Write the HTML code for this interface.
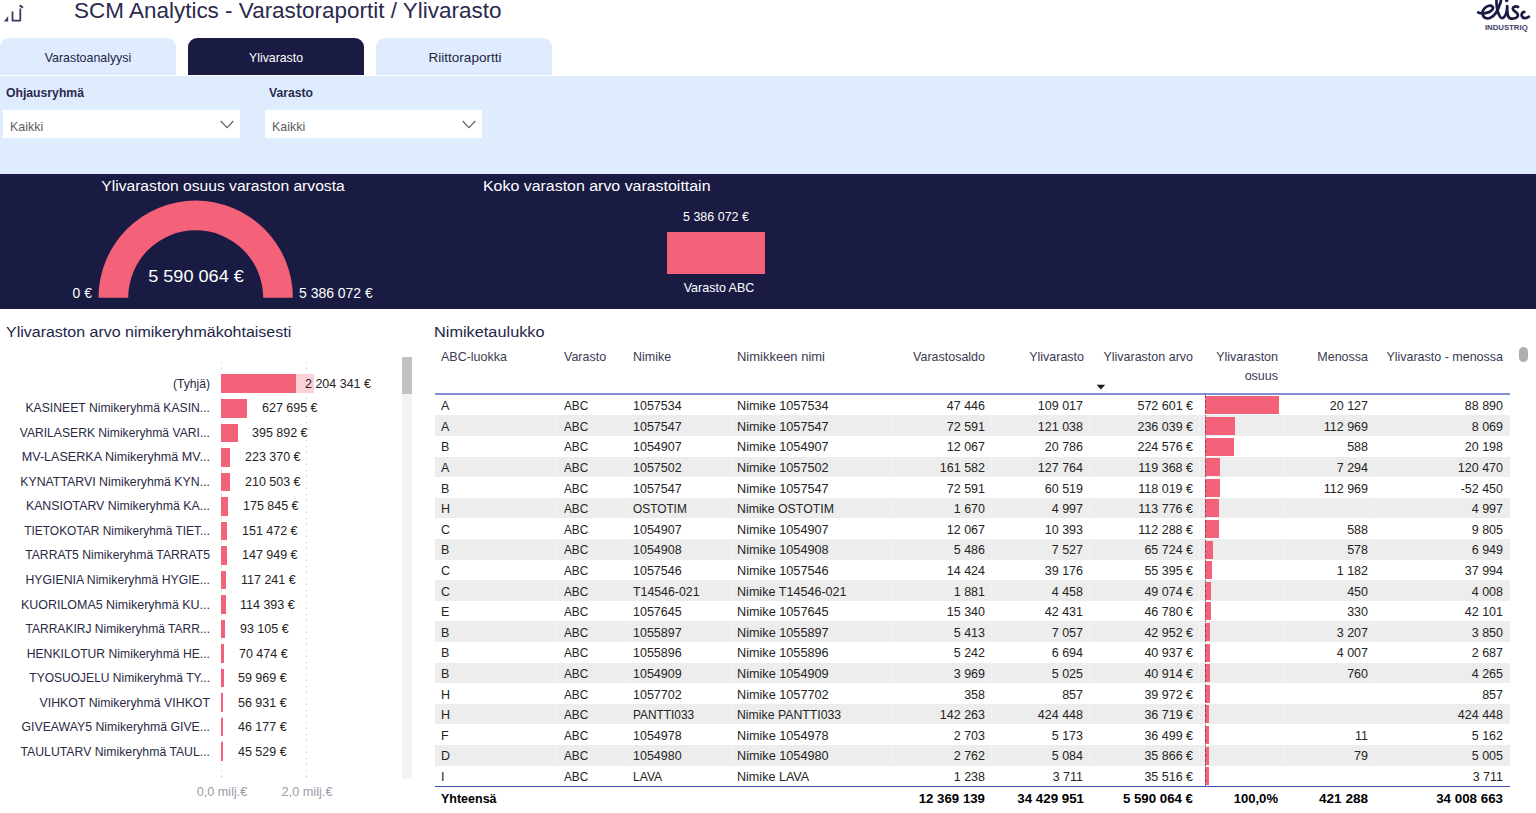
<!DOCTYPE html>
<html lang="fi"><head><meta charset="utf-8"><title>SCM Analytics - Varastoraportit / Ylivarasto</title>
<style>
*{box-sizing:border-box;margin:0;padding:0}
html,body{width:1536px;height:813px;overflow:hidden;background:#fff}
body{position:relative;font-family:"Liberation Sans",sans-serif;color:#252423;}
.a{position:absolute;white-space:nowrap}
.t,.r,.c{position:absolute;white-space:nowrap;line-height:20px;height:20px}
.t{transform-origin:0 50%}
.r{text-align:right;transform-origin:100% 50%}
.c{text-align:center;transform-origin:50% 50%}
.tab{position:absolute;top:38.4px;height:36.7px;width:176px;border-radius:9px 9px 0 0;background:#dfecfd}
.dd{position:absolute;top:110px;height:28.2px;background:#fff;}
.row{position:absolute;left:435px;width:1074.5px;height:20.6px}
.sep{position:absolute;top:394px;width:1px;height:393px;background:rgba(255,255,255,.3)}
</style></head><body>

<svg class="a" style="left:0;top:0" width="30" height="26" viewBox="0 0 30 26"><path d="M3.9 21.6 L8.2 16 L8.2 21.6 Z" fill="#3b3a5e"/><path d="M12.5 11.6 V20.6 H20.3 V8.6" fill="none" stroke="#3b3a5e" stroke-width="1.8" stroke-linejoin="round"/><path d="M19.6 5.4 L23 7.6" stroke="#3b3a5e" stroke-width="1.9" fill="none"/></svg>
<div class="t" id="title" style="top:-0.27px;font-size:22.7px;left:74.3px;color:#2b2a4c;transform:scaleX(0.9904);">SCM Analytics - Varastoraportit / Ylivarasto</div>
<svg class="a" style="left:1472px;top:0" width="64" height="34" viewBox="0 0 64 34">
<g fill="none" stroke="#1a1b43" stroke-width="2.7" stroke-linecap="round" stroke-linejoin="round">
<path d="M6.2 12.5 C9.5 13.9 17 13.6 20.2 9.9 C22.2 7.4 20 5.2 16.8 5.8 C12.3 6.8 9.9 11.2 10.6 14.4 C11.4 18 15 19.1 18.4 17.7 C22.7 15.9 26.2 10 28.3 3 C29.1 0.5 29.5 -2 28.7 -4 C27.4 -6.5 24.7 -4 24.5 0 C24.3 5 25.6 12 27.6 16 C28.7 18.2 30.6 18.9 32.1 17.2 C34.2 14.8 35 10 35.2 6.2 C35.2 10 35.3 13.8 36.2 16.2 C37 18.2 39.5 18.9 41.8 18.5 C45 18 47 16 45.2 13.4 C43.7 11.3 40.5 10.6 40.8 8.6 C41.2 6.6 44.2 5.9 46.0 7.0"/>
<path d="M52.3 11.9 C50.4 11.9 49.2 14.1 49.8 16 C50.6 18.4 54.1 18.9 56.8 16.7"/>
</g><circle cx="34.7" cy="0.5" r="1.7" fill="#1a1b43"/>
<text x="34.3" y="29.5" text-anchor="middle" font-family="Liberation Sans, sans-serif" font-weight="bold" font-size="7.8" fill="#3f3f68" textLength="42.8" lengthAdjust="spacingAndGlyphs">INDUSTRIQ</text></svg>

<div class="tab" style="left:0"></div>
<div class="tab" style="left:188px;background:#1a1b43"></div>
<div class="tab" style="left:376px"></div>
<div class="a" style="left:0;top:76px;width:1536px;height:98px;background:#dfecfd"></div>
<div class="c" id="tb1" style="top:48.23px;font-size:13.2px;left:-111.8px;width:400px;color:#252449;transform:scaleX(0.9389);">Varastoanalyysi</div>
<div class="c" id="tb2" style="top:48.23px;font-size:13.2px;left:76px;width:400px;color:#fff;transform:scaleX(0.9325);">Ylivarasto</div>
<div class="c" id="tb3" style="top:48.23px;font-size:13.2px;left:265px;width:400px;color:#252449;transform:scaleX(1.0268);">Riittoraportti</div>
<div class="t" id="f1" style="top:83.06px;font-size:12.8px;left:6px;color:#2b2a4e;font-weight:bold;transform:scaleX(0.9536);">Ohjausryhmä</div>
<div class="t" id="f2" style="top:83.06px;font-size:12.8px;left:268.5px;color:#2b2a4e;font-weight:bold;transform:scaleX(0.9514);">Varasto</div>
<div class="dd" style="left:3px;width:237px"></div>
<div class="dd" style="left:265px;width:217px"></div>
<div class="t" id="k1" style="top:116.83px;font-size:13.2px;left:10px;color:#605e5c;transform:scaleX(0.947);">Kaikki</div>
<div class="t" id="k2" style="top:116.83px;font-size:13.2px;left:272px;color:#605e5c;transform:scaleX(0.947);">Kaikki</div>
<svg class="a" style="left:218px;top:118px" width="18" height="14"><path d="M2.7 3 L9 9.6 L15.3 3" fill="none" stroke="#605e5c" stroke-width="1.1"/></svg>
<svg class="a" style="left:460px;top:118px" width="18" height="14"><path d="M2.7 3 L9 9.6 L15.3 3" fill="none" stroke="#605e5c" stroke-width="1.1"/></svg>

<div class="a" style="left:0;top:173.7px;width:1536px;height:135px;background:#1a1b43"></div>
<svg class="a" style="left:90px;top:195px" width="215" height="105" viewBox="90 195 215 105"><path d="M98.5 297.8 A97.2 97.2 0 0 1 292.9 297.8 L263.2 297.8 A67.5 67.5 0 0 0 128.2 297.8 Z" fill="#f4627a"/></svg>
<div class="a" style="left:667.4px;top:232px;width:97.2px;height:41.8px;background:#f4627a"></div>
<div class="c" id="g1" style="top:175.66px;font-size:15.4px;left:23.19999999999999px;width:400px;color:#fff;transform:scaleX(1.0165);">Ylivaraston osuus varaston arvosta</div>
<div class="c" id="g2" style="top:266.21px;font-size:17.3px;left:-4.5px;width:400px;color:#fff;transform:scaleX(1.0482);">5 590 064 €</div>
<div class="r" id="g3" style="top:282.75px;font-size:14px;left:-307.6px;width:400px;color:#fff;transform:scaleX(0.9965);">0 €</div>
<div class="t" id="g4" style="top:282.75px;font-size:14px;left:299.4px;color:#fff;transform:scaleX(0.9977);">5 386 072 €</div>
<div class="t" id="b1" style="top:175.66px;font-size:15.4px;left:482.5px;color:#fff;transform:scaleX(1.0348);">Koko varaston arvo varastoittain</div>
<div class="c" id="b2" style="top:207.03px;font-size:13.2px;left:516.2px;width:400px;color:#fff;transform:scaleX(0.947);">5 386 072 €</div>
<div class="c" id="b3" style="top:277.83px;font-size:13.2px;left:519.3px;width:400px;color:#fff;transform:scaleX(0.947);">Varasto ABC</div>
<div class="t" id="lt" style="top:321.76px;font-size:15.4px;left:6.4px;color:#252449;transform:scaleX(1.0387);">Ylivaraston arvo nimikeryhmäkohtaisesti</div>
<div class="a" style="left:221px;top:362px;width:1px;height:418px;background:repeating-linear-gradient(to bottom,#bcc0cf 0,#bcc0cf 1.2px,transparent 1.2px,transparent 6px)"></div>
<div class="a" style="left:306px;top:362px;width:1px;height:418px;background:repeating-linear-gradient(to bottom,#bcc0cf 0,#bcc0cf 1.2px,transparent 1.2px,transparent 6px)"></div>
<div class="a" style="left:402.3px;top:357px;width:9.5px;height:422px;background:#f3f3f3"></div>
<div class="a" style="left:402.3px;top:357px;width:9.5px;height:36.7px;background:#c1c1c1"></div>

<div class="a" style="left:221px;top:374.4px;width:92.8px;height:18.7px;background:#f4627a"></div>
<div class="r" id="gl0" style="top:373.73px;font-size:13.2px;left:-189.7px;width:400px;color:#2b2a45;transform:scaleX(0.9203);">(Tyhjä)</div>
<div class="a" style="left:295.7px;top:374.4px;width:25px;height:18.7px;background:rgba(255,255,255,.7)"></div>
<div class="t" id="gv0" style="top:373.73px;font-size:13.2px;left:305.3px;transform:scaleX(0.947);">2 204 341 €</div>
<div class="a" style="left:221px;top:398.9px;width:26.4px;height:18.7px;background:#f4627a"></div>
<div class="r" id="gl1" style="top:398.26px;font-size:13.2px;left:-189.7px;width:400px;color:#2b2a45;transform:scaleX(0.9233);">KASINEET Nimikeryhmä KASIN...</div>
<div class="t" id="gv1" style="top:398.26px;font-size:13.2px;left:262.0px;transform:scaleX(0.947);">627 695 €</div>
<div class="a" style="left:221px;top:423.5px;width:16.7px;height:18.7px;background:#f4627a"></div>
<div class="r" id="gl2" style="top:422.79px;font-size:13.2px;left:-189.7px;width:400px;color:#2b2a45;transform:scaleX(0.9197);">VARILASERK Nimikeryhmä VARI...</div>
<div class="t" id="gv2" style="top:422.79px;font-size:13.2px;left:252.3px;transform:scaleX(0.947);">395 892 €</div>
<div class="a" style="left:221px;top:448.0px;width:9.4px;height:18.7px;background:#f4627a"></div>
<div class="r" id="gl3" style="top:447.32px;font-size:13.2px;left:-189.7px;width:400px;color:#2b2a45;transform:scaleX(0.9539);">MV-LASERKA Nimikeryhmä MV...</div>
<div class="t" id="gv3" style="top:447.32px;font-size:13.2px;left:245.0px;transform:scaleX(0.947);">223 370 €</div>
<div class="a" style="left:221px;top:472.5px;width:8.9px;height:18.7px;background:#f4627a"></div>
<div class="r" id="gl4" style="top:471.85px;font-size:13.2px;left:-189.7px;width:400px;color:#2b2a45;transform:scaleX(0.9350);">KYNATTARVI Nimikeryhmä KYN...</div>
<div class="t" id="gv4" style="top:471.85px;font-size:13.2px;left:244.5px;transform:scaleX(0.947);">210 503 €</div>
<div class="a" style="left:221px;top:497.0px;width:7.4px;height:18.7px;background:#f4627a"></div>
<div class="r" id="gl5" style="top:496.38px;font-size:13.2px;left:-189.7px;width:400px;color:#2b2a45;transform:scaleX(0.9362);">KANSIOTARV Nimikeryhmä KA...</div>
<div class="t" id="gv5" style="top:496.38px;font-size:13.2px;left:243.0px;transform:scaleX(0.947);">175 845 €</div>
<div class="a" style="left:221px;top:521.6px;width:6.4px;height:18.7px;background:#f4627a"></div>
<div class="r" id="gl6" style="top:520.91px;font-size:13.2px;left:-189.7px;width:400px;color:#2b2a45;transform:scaleX(0.9056);">TIETOKOTAR Nimikeryhmä TIET...</div>
<div class="t" id="gv6" style="top:520.91px;font-size:13.2px;left:242.0px;transform:scaleX(0.947);">151 472 €</div>
<div class="a" style="left:221px;top:546.1px;width:6.2px;height:18.7px;background:#f4627a"></div>
<div class="r" id="gl7" style="top:545.44px;font-size:13.2px;left:-189.7px;width:400px;color:#2b2a45;transform:scaleX(0.9227);">TARRAT5 Nimikeryhmä TARRAT5</div>
<div class="t" id="gv7" style="top:545.44px;font-size:13.2px;left:241.8px;transform:scaleX(0.947);">147 949 €</div>
<div class="a" style="left:221px;top:570.6px;width:4.9px;height:18.7px;background:#f4627a"></div>
<div class="r" id="gl8" style="top:569.97px;font-size:13.2px;left:-189.7px;width:400px;color:#2b2a45;transform:scaleX(0.9290);">HYGIENIA Nimikeryhmä HYGIE...</div>
<div class="t" id="gv8" style="top:569.97px;font-size:13.2px;left:240.5px;transform:scaleX(0.947);">117 241 €</div>
<div class="a" style="left:221px;top:595.2px;width:4.8px;height:18.7px;background:#f4627a"></div>
<div class="r" id="gl9" style="top:594.50px;font-size:13.2px;left:-189.7px;width:400px;color:#2b2a45;transform:scaleX(0.9452);">KUORILOMA5 Nimikeryhmä KU...</div>
<div class="t" id="gv9" style="top:594.50px;font-size:13.2px;left:240.4px;transform:scaleX(0.947);">114 393 €</div>
<div class="a" style="left:221px;top:619.7px;width:3.9px;height:18.7px;background:#f4627a"></div>
<div class="r" id="gl10" style="top:619.03px;font-size:13.2px;left:-189.7px;width:400px;color:#2b2a45;transform:scaleX(0.9123);">TARRAKIRJ Nimikeryhmä TARR...</div>
<div class="t" id="gv10" style="top:619.03px;font-size:13.2px;left:239.5px;transform:scaleX(0.947);">93 105 €</div>
<div class="a" style="left:221px;top:644.2px;width:3.0px;height:18.7px;background:#f4627a"></div>
<div class="r" id="gl11" style="top:643.56px;font-size:13.2px;left:-189.7px;width:400px;color:#2b2a45;transform:scaleX(0.9231);">HENKILOTUR Nimikeryhmä HE...</div>
<div class="t" id="gv11" style="top:643.56px;font-size:13.2px;left:238.6px;transform:scaleX(0.947);">70 474 €</div>
<div class="a" style="left:221px;top:668.8px;width:2.5px;height:18.7px;background:#f4627a"></div>
<div class="r" id="gl12" style="top:668.09px;font-size:13.2px;left:-189.7px;width:400px;color:#2b2a45;transform:scaleX(0.9121);">TYOSUOJELU Nimikeryhmä TY...</div>
<div class="t" id="gv12" style="top:668.09px;font-size:13.2px;left:238.1px;transform:scaleX(0.947);">59 969 €</div>
<div class="a" style="left:221px;top:693.3px;width:2.4px;height:18.7px;background:#f4627a"></div>
<div class="r" id="gl13" style="top:692.62px;font-size:13.2px;left:-189.7px;width:400px;color:#2b2a45;transform:scaleX(0.9357);">VIHKOT Nimikeryhmä VIHKOT</div>
<div class="t" id="gv13" style="top:692.62px;font-size:13.2px;left:238.0px;transform:scaleX(0.947);">56 931 €</div>
<div class="a" style="left:221px;top:717.8px;width:1.9px;height:18.7px;background:#f4627a"></div>
<div class="r" id="gl14" style="top:717.15px;font-size:13.2px;left:-189.7px;width:400px;color:#2b2a45;transform:scaleX(0.9309);">GIVEAWAY5 Nimikeryhmä GIVE...</div>
<div class="t" id="gv14" style="top:717.15px;font-size:13.2px;left:237.5px;transform:scaleX(0.947);">46 177 €</div>
<div class="a" style="left:221px;top:742.4px;width:1.9px;height:18.7px;background:#f4627a"></div>
<div class="r" id="gl15" style="top:741.68px;font-size:13.2px;left:-189.7px;width:400px;color:#2b2a45;transform:scaleX(0.9291);">TAULUTARV Nimikeryhmä TAUL...</div>
<div class="t" id="gv15" style="top:741.68px;font-size:13.2px;left:237.5px;transform:scaleX(0.947);">45 529 €</div>
<div class="c" id="ax1" style="top:781.63px;font-size:13.2px;left:22px;width:400px;color:#9c9ca8;transform:scaleX(0.9606);">0,0 milj.€</div>
<div class="c" id="ax2" style="top:781.63px;font-size:13.2px;left:106.5px;width:400px;color:#9c9ca8;transform:scaleX(0.9663);">2,0 milj.€</div>
<div class="t" id="tt" style="top:321.56px;font-size:15.4px;left:434px;color:#252449;transform:scaleX(1.0598);">Nimiketaulukko</div>
<div class="t" id="e1" style="top:347.33px;font-size:13.2px;left:441px;color:#3b3a52;transform:scaleX(0.947);">ABC-luokka</div>
<div class="t" id="e2" style="top:347.33px;font-size:13.2px;left:563.5px;color:#3b3a52;transform:scaleX(0.947);">Varasto</div>
<div class="t" id="e3" style="top:347.33px;font-size:13.2px;left:632.5px;color:#3b3a52;transform:scaleX(0.947);">Nimike</div>
<div class="t" id="hnn" style="top:347.33px;font-size:13.2px;left:737.3px;color:#3b3a52;transform:scaleX(0.9843);">Nimikkeen nimi</div>
<div class="r" id="e4" style="top:347.33px;font-size:13.2px;left:584.7px;width:400px;color:#3b3a52;transform:scaleX(0.947);">Varastosaldo</div>
<div class="r" id="e5" style="top:347.33px;font-size:13.2px;left:683.5px;width:400px;color:#3b3a52;transform:scaleX(0.947);">Ylivarasto</div>
<div class="r" id="e6" style="top:347.33px;font-size:13.2px;left:793px;width:400px;color:#3b3a52;transform:scaleX(0.947);">Ylivaraston arvo</div>
<div class="r" id="e7" style="top:347.33px;font-size:13.2px;left:878.0999999999999px;width:400px;color:#3b3a52;transform:scaleX(0.947);">Ylivaraston</div>
<div class="r" id="e8" style="top:365.93px;font-size:13.2px;left:878.0999999999999px;width:400px;color:#3b3a52;transform:scaleX(0.947);">osuus</div>
<div class="r" id="e9" style="top:347.33px;font-size:13.2px;left:968px;width:400px;color:#3b3a52;transform:scaleX(0.947);">Menossa</div>
<div class="r" id="e10" style="top:347.33px;font-size:13.2px;left:1103px;width:400px;color:#3b3a52;transform:scaleX(0.947);">Ylivarasto - menossa</div>
<svg class="a" style="left:1096px;top:384px" width="10" height="6"><path d="M0.6 0.8 L9.2 0.8 L4.9 5.4 Z" fill="#1b1b1b"/></svg>
<div class="a" style="left:1519px;top:347px;width:9px;height:14.8px;border-radius:4.5px;background:#b0aeae"></div>

<div class="row" style="top:394.8px;background:#fff"></div>
<div class="a" style="left:1204.8px;top:396.3px;width:74.0px;height:18px;background:#f4627a"></div>
<div class="t" id="e11" style="top:396.23px;font-size:13.2px;left:441px;transform:scaleX(0.947);">A</div>
<div class="t" id="e12" style="top:396.23px;font-size:13.2px;left:563.9px;transform:scaleX(0.8922);">ABC</div>
<div class="t" id="e13" style="top:396.23px;font-size:13.2px;left:632.7px;transform:scaleX(0.947);">1057534</div>
<div class="t" id="e14" style="top:396.23px;font-size:13.2px;left:737.3px;transform:scaleX(0.9610);">Nimike 1057534</div>
<div class="r" id="e15" style="top:396.23px;font-size:13.2px;left:584.6px;width:400px;transform:scaleX(0.947);">47 446</div>
<div class="r" id="e16" style="top:396.23px;font-size:13.2px;left:683.4000000000001px;width:400px;transform:scaleX(0.947);">109 017</div>
<div class="r" id="e17" style="top:396.23px;font-size:13.2px;left:793px;width:400px;transform:scaleX(0.947);">572 601 €</div>
<div class="r" id="e18" style="top:396.23px;font-size:13.2px;left:968px;width:400px;transform:scaleX(0.947);">20 127</div>
<div class="r" id="e19" style="top:396.23px;font-size:13.2px;left:1103px;width:400px;transform:scaleX(0.947);">88 890</div>
<div class="row" style="top:415.4px;background:#ededed"></div>
<div class="a" style="left:1204.8px;top:416.9px;width:30.5px;height:18px;background:#f4627a"></div>
<div class="t" id="e20" style="top:416.83px;font-size:13.2px;left:441px;transform:scaleX(0.947);">A</div>
<div class="t" id="e21" style="top:416.83px;font-size:13.2px;left:563.9px;transform:scaleX(0.8922);">ABC</div>
<div class="t" id="e22" style="top:416.83px;font-size:13.2px;left:632.7px;transform:scaleX(0.947);">1057547</div>
<div class="t" id="e23" style="top:416.83px;font-size:13.2px;left:737.3px;transform:scaleX(0.9610);">Nimike 1057547</div>
<div class="r" id="e24" style="top:416.83px;font-size:13.2px;left:584.6px;width:400px;transform:scaleX(0.947);">72 591</div>
<div class="r" id="e25" style="top:416.83px;font-size:13.2px;left:683.4000000000001px;width:400px;transform:scaleX(0.947);">121 038</div>
<div class="r" id="e26" style="top:416.83px;font-size:13.2px;left:793px;width:400px;transform:scaleX(0.947);">236 039 €</div>
<div class="r" id="e27" style="top:416.83px;font-size:13.2px;left:968px;width:400px;transform:scaleX(0.947);">112 969</div>
<div class="r" id="e28" style="top:416.83px;font-size:13.2px;left:1103px;width:400px;transform:scaleX(0.947);">8 069</div>
<div class="row" style="top:436.0px;background:#fff"></div>
<div class="a" style="left:1204.8px;top:437.5px;width:29.0px;height:18px;background:#f4627a"></div>
<div class="t" id="e29" style="top:437.43px;font-size:13.2px;left:441px;transform:scaleX(0.947);">B</div>
<div class="t" id="e30" style="top:437.43px;font-size:13.2px;left:563.9px;transform:scaleX(0.8922);">ABC</div>
<div class="t" id="e31" style="top:437.43px;font-size:13.2px;left:632.7px;transform:scaleX(0.947);">1054907</div>
<div class="t" id="e32" style="top:437.43px;font-size:13.2px;left:737.3px;transform:scaleX(0.9610);">Nimike 1054907</div>
<div class="r" id="e33" style="top:437.43px;font-size:13.2px;left:584.6px;width:400px;transform:scaleX(0.947);">12 067</div>
<div class="r" id="e34" style="top:437.43px;font-size:13.2px;left:683.4000000000001px;width:400px;transform:scaleX(0.947);">20 786</div>
<div class="r" id="e35" style="top:437.43px;font-size:13.2px;left:793px;width:400px;transform:scaleX(0.947);">224 576 €</div>
<div class="r" id="e36" style="top:437.43px;font-size:13.2px;left:968px;width:400px;transform:scaleX(0.947);">588</div>
<div class="r" id="e37" style="top:437.43px;font-size:13.2px;left:1103px;width:400px;transform:scaleX(0.947);">20 198</div>
<div class="row" style="top:456.6px;background:#ededed"></div>
<div class="a" style="left:1204.8px;top:458.1px;width:15.4px;height:18px;background:#f4627a"></div>
<div class="t" id="e38" style="top:458.03px;font-size:13.2px;left:441px;transform:scaleX(0.947);">A</div>
<div class="t" id="e39" style="top:458.03px;font-size:13.2px;left:563.9px;transform:scaleX(0.8922);">ABC</div>
<div class="t" id="e40" style="top:458.03px;font-size:13.2px;left:632.7px;transform:scaleX(0.947);">1057502</div>
<div class="t" id="e41" style="top:458.03px;font-size:13.2px;left:737.3px;transform:scaleX(0.9610);">Nimike 1057502</div>
<div class="r" id="e42" style="top:458.03px;font-size:13.2px;left:584.6px;width:400px;transform:scaleX(0.947);">161 582</div>
<div class="r" id="e43" style="top:458.03px;font-size:13.2px;left:683.4000000000001px;width:400px;transform:scaleX(0.947);">127 764</div>
<div class="r" id="e44" style="top:458.03px;font-size:13.2px;left:793px;width:400px;transform:scaleX(0.947);">119 368 €</div>
<div class="r" id="e45" style="top:458.03px;font-size:13.2px;left:968px;width:400px;transform:scaleX(0.947);">7 294</div>
<div class="r" id="e46" style="top:458.03px;font-size:13.2px;left:1103px;width:400px;transform:scaleX(0.947);">120 470</div>
<div class="row" style="top:477.2px;background:#fff"></div>
<div class="a" style="left:1204.8px;top:478.7px;width:15.3px;height:18px;background:#f4627a"></div>
<div class="t" id="e47" style="top:478.63px;font-size:13.2px;left:441px;transform:scaleX(0.947);">B</div>
<div class="t" id="e48" style="top:478.63px;font-size:13.2px;left:563.9px;transform:scaleX(0.8922);">ABC</div>
<div class="t" id="e49" style="top:478.63px;font-size:13.2px;left:632.7px;transform:scaleX(0.947);">1057547</div>
<div class="t" id="e50" style="top:478.63px;font-size:13.2px;left:737.3px;transform:scaleX(0.9610);">Nimike 1057547</div>
<div class="r" id="e51" style="top:478.63px;font-size:13.2px;left:584.6px;width:400px;transform:scaleX(0.947);">72 591</div>
<div class="r" id="e52" style="top:478.63px;font-size:13.2px;left:683.4000000000001px;width:400px;transform:scaleX(0.947);">60 519</div>
<div class="r" id="e53" style="top:478.63px;font-size:13.2px;left:793px;width:400px;transform:scaleX(0.947);">118 019 €</div>
<div class="r" id="e54" style="top:478.63px;font-size:13.2px;left:968px;width:400px;transform:scaleX(0.947);">112 969</div>
<div class="r" id="e55" style="top:478.63px;font-size:13.2px;left:1103px;width:400px;transform:scaleX(0.947);">-52 450</div>
<div class="row" style="top:497.8px;background:#ededed"></div>
<div class="a" style="left:1204.8px;top:499.3px;width:14.7px;height:18px;background:#f4627a"></div>
<div class="t" id="e56" style="top:499.23px;font-size:13.2px;left:441px;transform:scaleX(0.947);">H</div>
<div class="t" id="e57" style="top:499.23px;font-size:13.2px;left:563.9px;transform:scaleX(0.8922);">ABC</div>
<div class="t" id="e58" style="top:499.23px;font-size:13.2px;left:632.7px;transform:scaleX(0.8990);">OSTOTIM</div>
<div class="t" id="e59" style="top:499.23px;font-size:13.2px;left:737.3px;transform:scaleX(0.9336);">Nimike OSTOTIM</div>
<div class="r" id="e60" style="top:499.23px;font-size:13.2px;left:584.6px;width:400px;transform:scaleX(0.947);">1 670</div>
<div class="r" id="e61" style="top:499.23px;font-size:13.2px;left:683.4000000000001px;width:400px;transform:scaleX(0.947);">4 997</div>
<div class="r" id="e62" style="top:499.23px;font-size:13.2px;left:793px;width:400px;transform:scaleX(0.947);">113 776 €</div>
<div class="r" id="e63" style="top:499.23px;font-size:13.2px;left:1103px;width:400px;transform:scaleX(0.947);">4 997</div>
<div class="row" style="top:518.4px;background:#fff"></div>
<div class="a" style="left:1204.8px;top:519.9px;width:14.5px;height:18px;background:#f4627a"></div>
<div class="t" id="e64" style="top:519.83px;font-size:13.2px;left:441px;transform:scaleX(0.947);">C</div>
<div class="t" id="e65" style="top:519.83px;font-size:13.2px;left:563.9px;transform:scaleX(0.8922);">ABC</div>
<div class="t" id="e66" style="top:519.83px;font-size:13.2px;left:632.7px;transform:scaleX(0.947);">1054907</div>
<div class="t" id="e67" style="top:519.83px;font-size:13.2px;left:737.3px;transform:scaleX(0.9610);">Nimike 1054907</div>
<div class="r" id="e68" style="top:519.83px;font-size:13.2px;left:584.6px;width:400px;transform:scaleX(0.947);">12 067</div>
<div class="r" id="e69" style="top:519.83px;font-size:13.2px;left:683.4000000000001px;width:400px;transform:scaleX(0.947);">10 393</div>
<div class="r" id="e70" style="top:519.83px;font-size:13.2px;left:793px;width:400px;transform:scaleX(0.947);">112 288 €</div>
<div class="r" id="e71" style="top:519.83px;font-size:13.2px;left:968px;width:400px;transform:scaleX(0.947);">588</div>
<div class="r" id="e72" style="top:519.83px;font-size:13.2px;left:1103px;width:400px;transform:scaleX(0.947);">9 805</div>
<div class="row" style="top:539.0px;background:#ededed"></div>
<div class="a" style="left:1204.8px;top:540.5px;width:8.5px;height:18px;background:#f4627a"></div>
<div class="t" id="e73" style="top:540.43px;font-size:13.2px;left:441px;transform:scaleX(0.947);">B</div>
<div class="t" id="e74" style="top:540.43px;font-size:13.2px;left:563.9px;transform:scaleX(0.8922);">ABC</div>
<div class="t" id="e75" style="top:540.43px;font-size:13.2px;left:632.7px;transform:scaleX(0.947);">1054908</div>
<div class="t" id="e76" style="top:540.43px;font-size:13.2px;left:737.3px;transform:scaleX(0.9610);">Nimike 1054908</div>
<div class="r" id="e77" style="top:540.43px;font-size:13.2px;left:584.6px;width:400px;transform:scaleX(0.947);">5 486</div>
<div class="r" id="e78" style="top:540.43px;font-size:13.2px;left:683.4000000000001px;width:400px;transform:scaleX(0.947);">7 527</div>
<div class="r" id="e79" style="top:540.43px;font-size:13.2px;left:793px;width:400px;transform:scaleX(0.947);">65 724 €</div>
<div class="r" id="e80" style="top:540.43px;font-size:13.2px;left:968px;width:400px;transform:scaleX(0.947);">578</div>
<div class="r" id="e81" style="top:540.43px;font-size:13.2px;left:1103px;width:400px;transform:scaleX(0.947);">6 949</div>
<div class="row" style="top:559.6px;background:#fff"></div>
<div class="a" style="left:1204.8px;top:561.1px;width:7.2px;height:18px;background:#f4627a"></div>
<div class="t" id="e82" style="top:561.03px;font-size:13.2px;left:441px;transform:scaleX(0.947);">C</div>
<div class="t" id="e83" style="top:561.03px;font-size:13.2px;left:563.9px;transform:scaleX(0.8922);">ABC</div>
<div class="t" id="e84" style="top:561.03px;font-size:13.2px;left:632.7px;transform:scaleX(0.947);">1057546</div>
<div class="t" id="e85" style="top:561.03px;font-size:13.2px;left:737.3px;transform:scaleX(0.9610);">Nimike 1057546</div>
<div class="r" id="e86" style="top:561.03px;font-size:13.2px;left:584.6px;width:400px;transform:scaleX(0.947);">14 424</div>
<div class="r" id="e87" style="top:561.03px;font-size:13.2px;left:683.4000000000001px;width:400px;transform:scaleX(0.947);">39 176</div>
<div class="r" id="e88" style="top:561.03px;font-size:13.2px;left:793px;width:400px;transform:scaleX(0.947);">55 395 €</div>
<div class="r" id="e89" style="top:561.03px;font-size:13.2px;left:968px;width:400px;transform:scaleX(0.947);">1 182</div>
<div class="r" id="e90" style="top:561.03px;font-size:13.2px;left:1103px;width:400px;transform:scaleX(0.947);">37 994</div>
<div class="row" style="top:580.2px;background:#ededed"></div>
<div class="a" style="left:1204.8px;top:581.7px;width:6.3px;height:18px;background:#f4627a"></div>
<div class="t" id="e91" style="top:581.63px;font-size:13.2px;left:441px;transform:scaleX(0.947);">C</div>
<div class="t" id="e92" style="top:581.63px;font-size:13.2px;left:563.9px;transform:scaleX(0.8922);">ABC</div>
<div class="t" id="e93" style="top:581.63px;font-size:13.2px;left:632.7px;transform:scaleX(0.9350);">T14546-021</div>
<div class="t" id="e94" style="top:581.63px;font-size:13.2px;left:737.3px;transform:scaleX(0.9543);">Nimike T14546-021</div>
<div class="r" id="e95" style="top:581.63px;font-size:13.2px;left:584.6px;width:400px;transform:scaleX(0.947);">1 881</div>
<div class="r" id="e96" style="top:581.63px;font-size:13.2px;left:683.4000000000001px;width:400px;transform:scaleX(0.947);">4 458</div>
<div class="r" id="e97" style="top:581.63px;font-size:13.2px;left:793px;width:400px;transform:scaleX(0.947);">49 074 €</div>
<div class="r" id="e98" style="top:581.63px;font-size:13.2px;left:968px;width:400px;transform:scaleX(0.947);">450</div>
<div class="r" id="e99" style="top:581.63px;font-size:13.2px;left:1103px;width:400px;transform:scaleX(0.947);">4 008</div>
<div class="row" style="top:600.8px;background:#fff"></div>
<div class="a" style="left:1204.8px;top:602.3px;width:6.0px;height:18px;background:#f4627a"></div>
<div class="t" id="e100" style="top:602.23px;font-size:13.2px;left:441px;transform:scaleX(0.947);">E</div>
<div class="t" id="e101" style="top:602.23px;font-size:13.2px;left:563.9px;transform:scaleX(0.8922);">ABC</div>
<div class="t" id="e102" style="top:602.23px;font-size:13.2px;left:632.7px;transform:scaleX(0.947);">1057645</div>
<div class="t" id="e103" style="top:602.23px;font-size:13.2px;left:737.3px;transform:scaleX(0.9610);">Nimike 1057645</div>
<div class="r" id="e104" style="top:602.23px;font-size:13.2px;left:584.6px;width:400px;transform:scaleX(0.947);">15 340</div>
<div class="r" id="e105" style="top:602.23px;font-size:13.2px;left:683.4000000000001px;width:400px;transform:scaleX(0.947);">42 431</div>
<div class="r" id="e106" style="top:602.23px;font-size:13.2px;left:793px;width:400px;transform:scaleX(0.947);">46 780 €</div>
<div class="r" id="e107" style="top:602.23px;font-size:13.2px;left:968px;width:400px;transform:scaleX(0.947);">330</div>
<div class="r" id="e108" style="top:602.23px;font-size:13.2px;left:1103px;width:400px;transform:scaleX(0.947);">42 101</div>
<div class="row" style="top:621.4px;background:#ededed"></div>
<div class="a" style="left:1204.8px;top:622.9px;width:5.6px;height:18px;background:#f4627a"></div>
<div class="t" id="e109" style="top:622.83px;font-size:13.2px;left:441px;transform:scaleX(0.947);">B</div>
<div class="t" id="e110" style="top:622.83px;font-size:13.2px;left:563.9px;transform:scaleX(0.8922);">ABC</div>
<div class="t" id="e111" style="top:622.83px;font-size:13.2px;left:632.7px;transform:scaleX(0.947);">1055897</div>
<div class="t" id="e112" style="top:622.83px;font-size:13.2px;left:737.3px;transform:scaleX(0.9610);">Nimike 1055897</div>
<div class="r" id="e113" style="top:622.83px;font-size:13.2px;left:584.6px;width:400px;transform:scaleX(0.947);">5 413</div>
<div class="r" id="e114" style="top:622.83px;font-size:13.2px;left:683.4000000000001px;width:400px;transform:scaleX(0.947);">7 057</div>
<div class="r" id="e115" style="top:622.83px;font-size:13.2px;left:793px;width:400px;transform:scaleX(0.947);">42 952 €</div>
<div class="r" id="e116" style="top:622.83px;font-size:13.2px;left:968px;width:400px;transform:scaleX(0.947);">3 207</div>
<div class="r" id="e117" style="top:622.83px;font-size:13.2px;left:1103px;width:400px;transform:scaleX(0.947);">3 850</div>
<div class="row" style="top:642.0px;background:#fff"></div>
<div class="a" style="left:1204.8px;top:643.5px;width:5.3px;height:18px;background:#f4627a"></div>
<div class="t" id="e118" style="top:643.43px;font-size:13.2px;left:441px;transform:scaleX(0.947);">B</div>
<div class="t" id="e119" style="top:643.43px;font-size:13.2px;left:563.9px;transform:scaleX(0.8922);">ABC</div>
<div class="t" id="e120" style="top:643.43px;font-size:13.2px;left:632.7px;transform:scaleX(0.947);">1055896</div>
<div class="t" id="e121" style="top:643.43px;font-size:13.2px;left:737.3px;transform:scaleX(0.9610);">Nimike 1055896</div>
<div class="r" id="e122" style="top:643.43px;font-size:13.2px;left:584.6px;width:400px;transform:scaleX(0.947);">5 242</div>
<div class="r" id="e123" style="top:643.43px;font-size:13.2px;left:683.4000000000001px;width:400px;transform:scaleX(0.947);">6 694</div>
<div class="r" id="e124" style="top:643.43px;font-size:13.2px;left:793px;width:400px;transform:scaleX(0.947);">40 937 €</div>
<div class="r" id="e125" style="top:643.43px;font-size:13.2px;left:968px;width:400px;transform:scaleX(0.947);">4 007</div>
<div class="r" id="e126" style="top:643.43px;font-size:13.2px;left:1103px;width:400px;transform:scaleX(0.947);">2 687</div>
<div class="row" style="top:662.6px;background:#ededed"></div>
<div class="a" style="left:1204.8px;top:664.1px;width:5.3px;height:18px;background:#f4627a"></div>
<div class="t" id="e127" style="top:664.03px;font-size:13.2px;left:441px;transform:scaleX(0.947);">B</div>
<div class="t" id="e128" style="top:664.03px;font-size:13.2px;left:563.9px;transform:scaleX(0.8922);">ABC</div>
<div class="t" id="e129" style="top:664.03px;font-size:13.2px;left:632.7px;transform:scaleX(0.947);">1054909</div>
<div class="t" id="e130" style="top:664.03px;font-size:13.2px;left:737.3px;transform:scaleX(0.9610);">Nimike 1054909</div>
<div class="r" id="e131" style="top:664.03px;font-size:13.2px;left:584.6px;width:400px;transform:scaleX(0.947);">3 969</div>
<div class="r" id="e132" style="top:664.03px;font-size:13.2px;left:683.4000000000001px;width:400px;transform:scaleX(0.947);">5 025</div>
<div class="r" id="e133" style="top:664.03px;font-size:13.2px;left:793px;width:400px;transform:scaleX(0.947);">40 914 €</div>
<div class="r" id="e134" style="top:664.03px;font-size:13.2px;left:968px;width:400px;transform:scaleX(0.947);">760</div>
<div class="r" id="e135" style="top:664.03px;font-size:13.2px;left:1103px;width:400px;transform:scaleX(0.947);">4 265</div>
<div class="row" style="top:683.2px;background:#fff"></div>
<div class="a" style="left:1204.8px;top:684.7px;width:5.2px;height:18px;background:#f4627a"></div>
<div class="t" id="e136" style="top:684.63px;font-size:13.2px;left:441px;transform:scaleX(0.947);">H</div>
<div class="t" id="e137" style="top:684.63px;font-size:13.2px;left:563.9px;transform:scaleX(0.8922);">ABC</div>
<div class="t" id="e138" style="top:684.63px;font-size:13.2px;left:632.7px;transform:scaleX(0.947);">1057702</div>
<div class="t" id="e139" style="top:684.63px;font-size:13.2px;left:737.3px;transform:scaleX(0.9610);">Nimike 1057702</div>
<div class="r" id="e140" style="top:684.63px;font-size:13.2px;left:584.6px;width:400px;transform:scaleX(0.947);">358</div>
<div class="r" id="e141" style="top:684.63px;font-size:13.2px;left:683.4000000000001px;width:400px;transform:scaleX(0.947);">857</div>
<div class="r" id="e142" style="top:684.63px;font-size:13.2px;left:793px;width:400px;transform:scaleX(0.947);">39 972 €</div>
<div class="r" id="e143" style="top:684.63px;font-size:13.2px;left:1103px;width:400px;transform:scaleX(0.947);">857</div>
<div class="row" style="top:703.8px;background:#ededed"></div>
<div class="a" style="left:1204.8px;top:705.3px;width:4.7px;height:18px;background:#f4627a"></div>
<div class="t" id="e144" style="top:705.23px;font-size:13.2px;left:441px;transform:scaleX(0.947);">H</div>
<div class="t" id="e145" style="top:705.23px;font-size:13.2px;left:563.9px;transform:scaleX(0.8922);">ABC</div>
<div class="t" id="e146" style="top:705.23px;font-size:13.2px;left:632.7px;transform:scaleX(0.9010);">PANTTI033</div>
<div class="t" id="e147" style="top:705.23px;font-size:13.2px;left:737.3px;transform:scaleX(0.9314);">Nimike PANTTI033</div>
<div class="r" id="e148" style="top:705.23px;font-size:13.2px;left:584.6px;width:400px;transform:scaleX(0.947);">142 263</div>
<div class="r" id="e149" style="top:705.23px;font-size:13.2px;left:683.4000000000001px;width:400px;transform:scaleX(0.947);">424 448</div>
<div class="r" id="e150" style="top:705.23px;font-size:13.2px;left:793px;width:400px;transform:scaleX(0.947);">36 719 €</div>
<div class="r" id="e151" style="top:705.23px;font-size:13.2px;left:1103px;width:400px;transform:scaleX(0.947);">424 448</div>
<div class="row" style="top:724.4px;background:#fff"></div>
<div class="a" style="left:1204.8px;top:725.9px;width:4.7px;height:18px;background:#f4627a"></div>
<div class="t" id="e152" style="top:725.83px;font-size:13.2px;left:441px;transform:scaleX(0.947);">F</div>
<div class="t" id="e153" style="top:725.83px;font-size:13.2px;left:563.9px;transform:scaleX(0.8922);">ABC</div>
<div class="t" id="e154" style="top:725.83px;font-size:13.2px;left:632.7px;transform:scaleX(0.947);">1054978</div>
<div class="t" id="e155" style="top:725.83px;font-size:13.2px;left:737.3px;transform:scaleX(0.9610);">Nimike 1054978</div>
<div class="r" id="e156" style="top:725.83px;font-size:13.2px;left:584.6px;width:400px;transform:scaleX(0.947);">2 703</div>
<div class="r" id="e157" style="top:725.83px;font-size:13.2px;left:683.4000000000001px;width:400px;transform:scaleX(0.947);">5 173</div>
<div class="r" id="e158" style="top:725.83px;font-size:13.2px;left:793px;width:400px;transform:scaleX(0.947);">36 499 €</div>
<div class="r" id="e159" style="top:725.83px;font-size:13.2px;left:968px;width:400px;transform:scaleX(0.947);">11</div>
<div class="r" id="e160" style="top:725.83px;font-size:13.2px;left:1103px;width:400px;transform:scaleX(0.947);">5 162</div>
<div class="row" style="top:745.0px;background:#ededed"></div>
<div class="a" style="left:1204.8px;top:746.5px;width:4.6px;height:18px;background:#f4627a"></div>
<div class="t" id="e161" style="top:746.43px;font-size:13.2px;left:441px;transform:scaleX(0.947);">D</div>
<div class="t" id="e162" style="top:746.43px;font-size:13.2px;left:563.9px;transform:scaleX(0.8922);">ABC</div>
<div class="t" id="e163" style="top:746.43px;font-size:13.2px;left:632.7px;transform:scaleX(0.947);">1054980</div>
<div class="t" id="e164" style="top:746.43px;font-size:13.2px;left:737.3px;transform:scaleX(0.9610);">Nimike 1054980</div>
<div class="r" id="e165" style="top:746.43px;font-size:13.2px;left:584.6px;width:400px;transform:scaleX(0.947);">2 762</div>
<div class="r" id="e166" style="top:746.43px;font-size:13.2px;left:683.4000000000001px;width:400px;transform:scaleX(0.947);">5 084</div>
<div class="r" id="e167" style="top:746.43px;font-size:13.2px;left:793px;width:400px;transform:scaleX(0.947);">35 866 €</div>
<div class="r" id="e168" style="top:746.43px;font-size:13.2px;left:968px;width:400px;transform:scaleX(0.947);">79</div>
<div class="r" id="e169" style="top:746.43px;font-size:13.2px;left:1103px;width:400px;transform:scaleX(0.947);">5 005</div>
<div class="row" style="top:765.6px;background:#fff"></div>
<div class="a" style="left:1204.8px;top:767.1px;width:4.6px;height:18px;background:#f4627a"></div>
<div class="t" id="e170" style="top:767.03px;font-size:13.2px;left:441px;transform:scaleX(0.947);">I</div>
<div class="t" id="e171" style="top:767.03px;font-size:13.2px;left:563.9px;transform:scaleX(0.8922);">ABC</div>
<div class="t" id="e172" style="top:767.03px;font-size:13.2px;left:632.7px;transform:scaleX(0.9192);">LAVA</div>
<div class="t" id="e173" style="top:767.03px;font-size:13.2px;left:737.3px;transform:scaleX(0.9533);">Nimike LAVA</div>
<div class="r" id="e174" style="top:767.03px;font-size:13.2px;left:584.6px;width:400px;transform:scaleX(0.947);">1 238</div>
<div class="r" id="e175" style="top:767.03px;font-size:13.2px;left:683.4000000000001px;width:400px;transform:scaleX(0.947);">3 711</div>
<div class="r" id="e176" style="top:767.03px;font-size:13.2px;left:793px;width:400px;transform:scaleX(0.947);">35 516 €</div>
<div class="r" id="e177" style="top:767.03px;font-size:13.2px;left:1103px;width:400px;transform:scaleX(0.947);">3 711</div>
<div class="sep" style="left:556px"></div>
<div class="sep" style="left:626px"></div>
<div class="sep" style="left:730.5px"></div>
<div class="sep" style="left:891.7px"></div>
<div class="sep" style="left:990.5px"></div>
<div class="sep" style="left:1089px"></div>
<div class="sep" style="left:1199px"></div>
<div class="sep" style="left:1284px"></div>
<div class="sep" style="left:1373.4px"></div>
<div class="a" style="left:435px;top:392.8px;width:1074.5px;height:2.2px;background:#7f8fd1"></div>
<div class="a" style="left:1204.8px;top:394.5px;width:0;height:392px;border-left:1px dashed rgba(26,27,67,.5)"></div>
<div class="a" style="left:435px;top:785.9px;width:1074.5px;height:1.6px;background:#3f51b5"></div>
<div class="t" id="e178" style="top:788.73px;font-size:13.2px;left:441px;color:#000;font-weight:bold;transform:scaleX(0.947);">Yhteensä</div>
<div class="r" id="e179" style="top:788.73px;font-size:13.2px;left:584.6px;width:400px;color:#000;font-weight:bold;transform:scaleX(1.0043);">12 369 139</div>
<div class="r" id="e180" style="top:788.73px;font-size:13.2px;left:683.5px;width:400px;color:#000;font-weight:bold;transform:scaleX(1.0104);">34 429 951</div>
<div class="r" id="e181" style="top:788.73px;font-size:13.2px;left:793px;width:400px;color:#000;font-weight:bold;transform:scaleX(1.0061);">5 590 064 €</div>
<div class="r" id="e182" style="top:788.73px;font-size:13.2px;left:878.4000000000001px;width:400px;color:#000;font-weight:bold;transform:scaleX(0.9903);">100,0%</div>
<div class="r" id="e183" style="top:788.73px;font-size:13.2px;left:968.4000000000001px;width:400px;color:#000;font-weight:bold;transform:scaleX(1.0279);">421 288</div>
<div class="r" id="e184" style="top:788.73px;font-size:13.2px;left:1103.3px;width:400px;color:#000;font-weight:bold;transform:scaleX(1.0119);">34 008 663</div>
</body></html>
